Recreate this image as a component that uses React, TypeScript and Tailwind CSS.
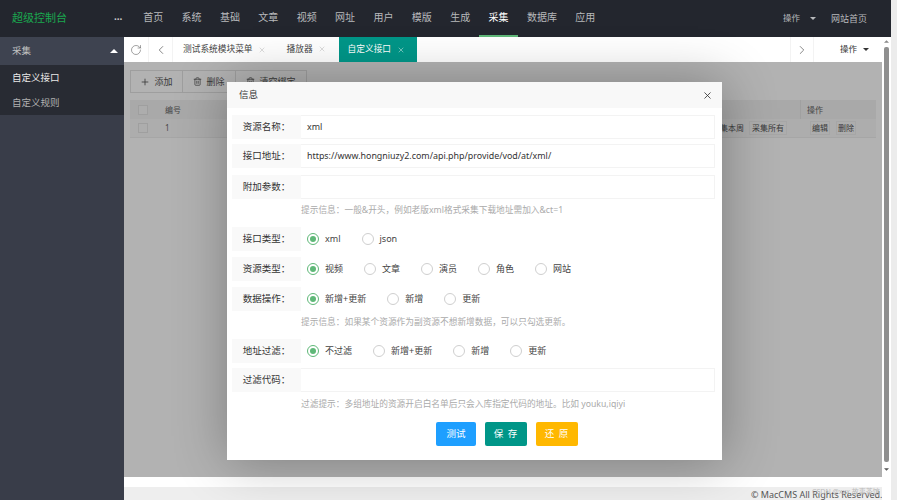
import { ChevronLeft, ChevronRight, Plus, RotateCw, Trash2, X } from "lucide-react";

const NAV = ["首页", "系统", "基础", "文章", "视频", "网址", "用户", "模版", "生成", "采集", "数据库", "应用"];

function Caret({ up, className }: { up?: boolean; className: string }) {
  return (
    <svg viewBox="0 0 8 4" className={className} fill="currentColor">
      <path d={up ? "M4 0 8 4H0z" : "M0 0h8L4 4z"} />
    </svg>
  );
}

function Radio({ label, on }: { label: string; on?: boolean }) {
  return (
    <div className="flex items-center gap-[6px]">
      <span
        className={`flex h-[12px] w-[12px] items-center justify-center rounded-full border ${
          on ? "border-[#5fb878]" : "border-[#cfcfcf]"
        }`}
      >
        {on && <span className="h-[6px] w-[6px] rounded-full bg-[#5fb878]" />}
      </span>
      <span className="text-[9px] text-[#444]">{label}</span>
    </div>
  );
}

function Row({ label, className, children }: { label: string; className: string; children?: React.ReactNode }) {
  return (
    <div className={`flex h-[24px] items-center ${className}`}>
      <div className="flex h-full w-[69px] shrink-0 items-center justify-center bg-[#f9f9f9] text-[9.5px] text-[#333]">
        {label}：
      </div>
      {children}
    </div>
  );
}

function Field({ label, value, className }: { label: string; value?: string; className: string }) {
  return (
    <Row label={label} className={className}>
      <div className="flex h-full flex-1 items-center border border-l-0 border-[#f3f3f3] pl-[6px] text-[8.9px] text-[#333]">
        {value}
      </div>
    </Row>
  );
}

function Radios({ label, items, className }: { label: string; items: string[]; className: string }) {
  return (
    <Row label={label} className={className}>
      <div className="flex items-center gap-[21px] pl-[6px]">
        {items.map((item, i) => (
          <Radio key={item} label={item} on={i === 0} />
        ))}
      </div>
    </Row>
  );
}

function Hint({ text, className }: { text: string; className: string }) {
  return <p className={`pl-[69px] text-[8.7px] leading-[12px] text-[#aaa] ${className}`}>{text}</p>;
}

function Tab({ label }: { label: string }) {
  return (
    <div className="flex h-full items-center gap-[5px] pl-[10px] pr-[6px] text-[8.7px] text-[#444]">
      {label}
      <X className="h-[8px] w-[8px] text-[#ccc]" />
    </div>
  );
}

function ToolBtn({ icon, label, className }: { icon: React.ReactNode; label: string; className: string }) {
  return (
    <div className={`flex h-full items-center justify-center gap-[4px] border border-[#e2e2e2] text-[9px] text-[#555] ${className}`}>
      {icon}
      {label}
    </div>
  );
}

export default function App() {
  return (
    <div className="flex h-[500px] w-[897px] overflow-hidden bg-[#ececec] font-['Noto_Sans','Noto_Sans_CJK_SC',sans-serif]">
      <div className="flex w-[891px] flex-col">
        {/* top bar */}
        <div className="flex h-[37px] shrink-0 items-center bg-[#23262e] text-[10px] text-[#b8b9bc]">
          <div className="w-[114px] pl-[12px] text-[11px] text-[#1aa84f]">超级控制台</div>
          <div className="w-[20px] text-[10px] font-bold leading-none text-[#ccc]">···</div>
          {NAV.map((n) => (
            <div
              key={n}
              className={`flex h-full items-center justify-center border-b-2 px-[9.2px] ${
                n === "采集" ? "border-[#5fb878] text-white" : "border-transparent"
              }`}
            >
              {n}
            </div>
          ))}
          <div className="ml-auto flex items-center pr-[24px] text-[9px]">
            <span className="text-[8.5px]">操作</span>
            <Caret className="ml-[10px] h-[3px] w-[6px]" />
            <span className="ml-[15px]">网站首页</span>
          </div>
        </div>

        <div className="flex min-h-0 flex-1">
          {/* side menu */}
          <div className="w-[124px] shrink-0 bg-[#393d49] text-[9.5px] text-[#c2c2c2]">
            <div className="flex h-[28px] items-center justify-between bg-[#3e4350] pl-[12px] pr-[6px]">
              采集
              <Caret up className="h-[4px] w-[8px] text-white" />
            </div>
            <div className="h-[50px] bg-[#282b33] pt-[1px]">
              <div className="flex h-[25px] items-center pl-[12px] text-[#e8e8e8]">自定义接口</div>
              <div className="flex h-[24px] items-center pl-[12px] text-[#b0b0b0]">自定义规则</div>
            </div>
          </div>

          {/* main area */}
          <div className="flex min-w-0 flex-1">
            <div className="flex min-w-0 flex-1 flex-col bg-white">
              <div className="flex h-[25px] shrink-0 items-center">
                <div className="flex h-full w-[25px] items-center justify-center border-r border-[#f3f3f3]">
                  <RotateCw className="h-[12px] w-[12px] text-[#666]" strokeWidth={1.2} />
                </div>
                <div className="flex h-full w-[24px] items-center justify-center border-r border-[#f3f3f3]">
                  <ChevronLeft className="h-[14px] w-[14px] text-[#555]" strokeWidth={1.2} />
                </div>
                <Tab label="测试系统模块菜单" />
                <div className="ml-[5px]">
                  <Tab label="播放器" />
                </div>
                <div className="ml-[7px] flex h-full w-[78px] items-center gap-[6px] bg-[#009688] pl-[9px] text-[8.7px] text-white">
                  自定义接口
                  <X className="h-[8px] w-[8px] text-[#a8dcd6]" />
                </div>
                <div className="ml-auto flex h-full w-[24px] items-center justify-center border-x border-[#f3f3f3]">
                  <ChevronRight className="h-[14px] w-[14px] text-[#555]" strokeWidth={1.2} />
                </div>
                <div className="flex w-[68px] items-center gap-[6px] pl-[26px] text-[8.5px] text-[#333]">
                  操作
                  <Caret className="h-[3px] w-[6px]" />
                </div>
              </div>

              {/* page behind the dialog */}
              <div className="relative flex-1">
                <div className="h-[415px] px-[6px] pt-[8px]">
                  <div className="flex h-[23px]">
                    <ToolBtn icon={<Plus className="h-[10px] w-[10px]" />} label="添加" className="w-[53px]" />
                    <ToolBtn icon={<Trash2 className="h-[9px] w-[9px]" />} label="删除" className="w-[53px] border-l-0" />
                    <ToolBtn icon={<Trash2 className="h-[9px] w-[9px]" />} label="清空绑定" className="w-[71px] border-l-0" />
                  </div>
                  <div className="mt-[7px] flex h-[19px] items-center bg-[#f2f2f2] text-[8px] text-[#666]">
                    <div className="flex w-[26px] justify-center">
                      <span className="h-[10px] w-[10px] border border-[#e4e4e4] bg-[#f8f8f8]" />
                    </div>
                    <span className="ml-[9px]">编号</span>
                    <span className="ml-auto w-[76px] border-l border-[#e6e6e6] pl-[6px] leading-[19px]">操作</span>
                  </div>
                  <div className="flex h-[19px] items-center border-b border-[#eee] bg-[#f8f8f8] text-[8px] text-[#666]">
                    <div className="flex w-[26px] justify-center">
                      <span className="h-[10px] w-[10px] border border-[#e4e4e4] bg-[#f8f8f8]" />
                    </div>
                    <span className="ml-[9px]">1</span>
                    <span className="ml-auto mr-[5px] text-[#555]">采集本周</span>
                    <span className="mr-[13px] border border-[#eeeeee] px-[2px] leading-[12px] text-[#555]">采集所有</span>
                    <div className="flex w-[76px] gap-[6px] pl-[10px] text-[#555]">
                      <span className="border border-[#eeeeee] px-[1px] leading-[12px]">编辑</span>
                      <span className="border border-[#eeeeee] px-[1px] leading-[12px]">删除</span>
                    </div>
                  </div>
                </div>
                <div className="absolute inset-x-0 top-0 h-[415px] bg-black/30" />
                <div className="h-[10px] bg-white" />
                <div className="relative h-[13px] overflow-hidden bg-[#eee]">
                  <span className="absolute left-[627px] top-[3px] whitespace-nowrap text-[9px] leading-[10px] text-[#555]">
                    © MacCMS All Rights Reserved.
                  </span>
                  <span className="absolute left-[688px] top-[1px] whitespace-nowrap text-[7px] leading-[8px] text-[#bbb]">
                    CSDN @xxx 故事茶馆
                  </span>
                </div>

                {/* dialog */}
                <div className="absolute left-[103px] top-[20px] h-[378px] w-[495px] bg-white shadow-[1px_1px_50px_rgba(0,0,0,0.3)]">
                  <div className="flex h-[26px] items-center justify-between bg-[#f8f8f8] pl-[12px] pr-[9px] text-[9.5px] text-[#333]">
                    信息
                    <X className="h-[11px] w-[11px] text-[#333]" strokeWidth={1.8} />
                  </div>
                  <div className="pl-[5px] pr-[7px]">
                    <Field label="资源名称" value="xml" className="mt-[7px]" />
                    <Field label="接口地址" value="https://www.hongniuzy2.com/api.php/provide/vod/at/xml/" className="mt-[5px]" />
                    <Field label="附加参数" className="mt-[7px]" />
                    <Hint text="提示信息：一般&开头，例如老版xml格式采集下载地址需加入&ct=1" className="mt-[5px]" />
                    <Radios label="接口类型" items={["xml", "json"]} className="mt-[11px]" />
                    <Radios label="资源类型" items={["视频", "文章", "演员", "角色", "网站"]} className="mt-[6px]" />
                    <Radios label="数据操作" items={["新增+更新", "新增", "更新"]} className="mt-[6px]" />
                    <Hint text="提示信息：如果某个资源作为副资源不想新增数据，可以只勾选更新。" className="mt-[5px]" />
                    <Radios label="地址过滤" items={["不过滤", "新增+更新", "新增", "更新"]} className="mt-[11px]" />
                    <Field label="过滤代码" className="mt-[5px]" />
                    <Hint text="过滤提示：多组地址的资源开启白名单后只会入库指定代码的地址。比如 youku,iqiyi" className="mt-[6px]" />
                    <div className="mt-[12px] flex justify-center gap-[9px] pl-[67px] text-[9.5px] text-white">
                      <div className="flex h-[24px] w-[40px] items-center justify-center rounded-[2px] bg-[#1e9fff]">测试</div>
                      <div className="flex h-[24px] w-[42px] items-center justify-center rounded-[2px] bg-[#009688] tracking-[1px]">保 存</div>
                      <div className="flex h-[24px] w-[42px] items-center justify-center rounded-[2px] bg-[#ffb800] tracking-[1px]">还 原</div>
                    </div>
                  </div>
                </div>
              </div>
            </div>

            {/* frame scrollbar */}
            <div className="flex w-[9px] shrink-0 flex-col items-center bg-white pt-[3px] text-[#888]">
              <Caret up className="h-[3px] w-[5px]" />
              <div className="mt-[4px] h-[415px] w-[5px] rounded-[2px] bg-[#8f8f8f]" />
              <Caret className="mt-[6px] h-[3px] w-[5px] text-[#555]" />
            </div>
          </div>
        </div>
      </div>
    </div>
  );
}
